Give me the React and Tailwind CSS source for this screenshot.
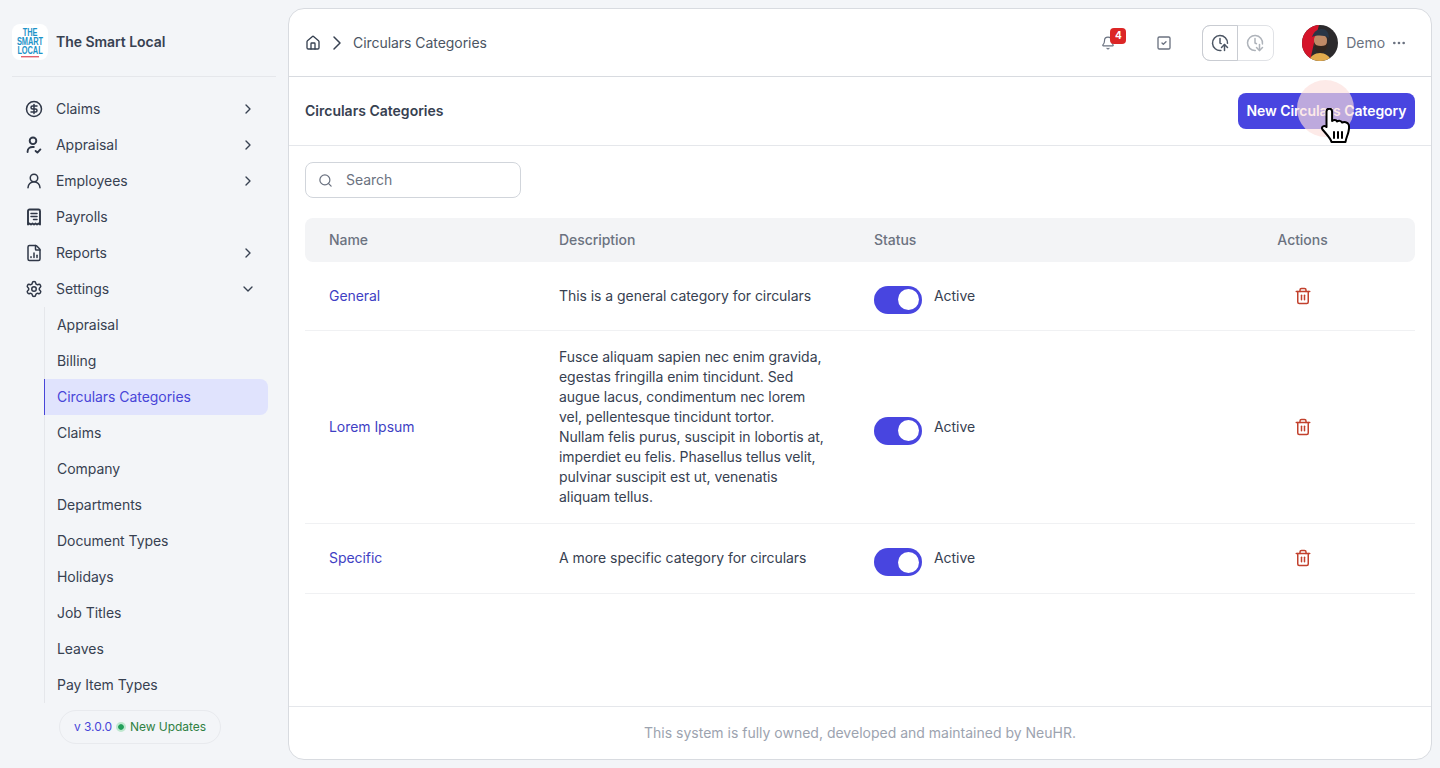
import {
    Bell,
    ChevronDown,
    ChevronRight,
    CircleDollarSign,
    ClockArrowDown,
    ClockArrowUp,
    Ellipsis,
    FileChartColumn,
    House,
    Search,
    Settings,
    SquareCheck,
    Trash2,
    UserRound,
} from 'lucide-react';

const AppraisalIcon = ({ className }) => (
    <svg viewBox="0 0 18 18" fill="none" stroke="currentColor" strokeWidth="1.9" strokeLinecap="round" strokeLinejoin="round" className={className}>
        <circle cx="8" cy="4.8" r="3.3" />
        <path d="M2.6 16v-.6c0-2.6 2.2-4.4 5-4.4h1.2" />
        <path d="M10.6 15l1.8 1.6 3-3.2" />
    </svg>
);

const PayrollIcon = ({ className }) => (
    <svg viewBox="0 0 18 18" fill="none" stroke="currentColor" strokeWidth="1.9" strokeLinecap="round" strokeLinejoin="round" className={className}>
        <path d="M3 16.500V3a1.500 1.500 0 0 1 1.500-1.500h9A1.500 1.500 0 0 1 15 3v13.500l-1.500-1-1.500 1-1.500-1-1.500 1-1.500-1-1.500 1-1.500-1z" />
        <path d="M6 5.500h6M6 8.500h6M8.500 11.500H12" strokeWidth="1.5" />
    </svg>
);

const mainLinks = [
    { label: 'Claims', icon: CircleDollarSign, arrow: true },
    { label: 'Appraisal', icon: AppraisalIcon, arrow: true },
    { label: 'Employees', icon: UserRound, arrow: true },
    { label: 'Payrolls', icon: PayrollIcon },
    { label: 'Reports', icon: FileChartColumn, arrow: true },
];

const settingsLinks = [
    'Appraisal',
    'Billing',
    'Circulars Categories',
    'Claims',
    'Company',
    'Departments',
    'Document Types',
    'Holidays',
    'Job Titles',
    'Leaves',
    'Pay Item Types',
];

const categories = [
    { name: 'General', description: 'This is a general category for circulars' },
    {
        name: 'Lorem Ipsum',
        description:
            'Fusce aliquam sapien nec enim gravida, egestas fringilla enim tincidunt. Sed augue lacus, condimentum nec lorem vel, pellentesque tincidunt tortor.\nNullam felis purus, suscipit in lobortis at, imperdiet eu felis. Phasellus tellus velit, pulvinar suscipit est ut, venenatis aliquam tellus.',
    },
    { name: 'Specific', description: 'A more specific category for circulars' },
];

const Logo = () => (
    <svg viewBox="0 0 36 36" className="w-9 h-9 rounded-lg bg-white">
        <g fill="#1d93c9" fontFamily="'Liberation Sans', sans-serif" fontWeight="700" fontSize="7.4" textAnchor="middle">
            <text transform="translate(18 11.500) scale(1 1.350)">THE</text>
            <text transform="translate(18 20.500) scale(1 1.350)">SMART</text>
            <text transform="translate(18 30) scale(1 1.350)">LOCAL</text>
        </g>
        <rect x="9" y="32" width="18" height="1.4" fill="#e2606c" />
    </svg>
);

const Avatar = () => (
    <svg viewBox="0 0 36 36" className="w-9 h-9 rounded-full">
        <rect width="36" height="36" fill="#2c2a2c" />
        <path d="M0 0h17L12 18 8 36H0z" fill="#d5142a" />
        <path d="M7 36c1-5 6-8 11-8s10 3 11 8z" fill="#e3ab4d" />
        <path d="M12 15c0-4 3-6 6-6s7 2 7 6c0 7-3 12-6.500 12S12 22 12 15z" fill="#c08a66" />
        <path d="M12 17c0 5 2 11 6.500 11S26 22 25.500 17c-1 3-3 4-6.500 4s-6-1-7-4z" fill="#33261f" />
        <path d="M10 12c2-6 6-8 10-8s7 3 7 9c-5-3-12-3-17-1z" fill="#2a3646" />
    </svg>
);

const Hand = ({ className }) => (
    <svg viewBox="0 0 32 36" fill="white" stroke="black" strokeWidth="2" strokeLinejoin="round" strokeLinecap="round" className={className}>
        <path d="M6.500 3.500a2.800 2.800 0 0 1 5.600 0V13c1.800-1.400 4-1.200 5 .5 1.800-1.200 4-.8 5 1 2-1 5.500-.5 6.500 2 .6 1.500.4 5-.2 7.500-.8 3.500-2.400 6-2.900 10H11.500c-.8-3.500-4-6.500-9-12.500-1.800-2.300 1.500-5 4-2.500V3.500z" />
        <path d="M14 24v6M18 24v6M22 24v6" fill="none" />
    </svg>
);

const Sidebar = () => (
    <aside className="w-[288px] h-full shrink-0 flex flex-col overflow-hidden">
        <div className="mx-3 mt-6 pb-4 h-[53px] flex items-start gap-2 border-b border-[#e5e7eb]">
            <Logo />
            <span className="leading-9 text-sm font-semibold text-[#374151]">The Smart Local</span>
        </div>

        <nav className="mt-[14px] ml-3 w-[256px] h-[612px] overflow-hidden text-sm text-[#374151]">
            {mainLinks.map((link) => (
                <a key={link.label} className="h-9 pl-[13px] pr-3 flex items-center">
                    <link.icon className="w-[18px] h-[18px] text-[#2f3747]" />
                    <span className="ml-[13px] flex-1">{link.label}</span>
                    {link.arrow && <ChevronRight className="w-4 h-4" />}
                </a>
            ))}

            <a className="h-9 pl-[13px] pr-3 flex items-center">
                <Settings className="w-[18px] h-[18px] text-[#2f3747]" />
                <span className="ml-[13px] flex-1">Settings</span>
                <ChevronDown className="w-4 h-4" />
            </a>

            <ul className="ml-8 border-l border-[#e5e7eb]">
                {settingsLinks.map((link) => {
                    const active = link === 'Circulars Categories';
                    return (
                        <li
                            key={link}
                            className={`h-9 pl-3 flex items-center ${
                                active ? 'bg-[#e0e3fd] text-[#4845d8] rounded-r-lg border-l border-[#4845d8] -ml-px' : ''
                            }`}
                        >
                            {link}
                        </li>
                    );
                })}
            </ul>
        </nav>

        <div className="ml-[59px] mt-[7px] w-[162px] h-[34px] rounded-full border border-[#e8eaee] flex items-center justify-center text-xs">
            <span className="text-[#4845d8]">v 3.0.0</span>
            <span className="mx-[6px] w-[6px] h-[6px] rounded-full bg-[#22a05a] outline-2 outline-[#bfe8cf]"></span>
            <span className="text-[#2f8043]">New Updates</span>
        </div>
    </aside>
);

const Header = () => (
    <header className="h-[68px] shrink-0 pl-4 pr-6 flex items-center border-b border-[#d8dbe0]">
        <House className="w-4 h-4 text-[#374151]" />
        <ChevronRight className="ml-1 w-6 h-6 text-[#374151]" strokeWidth={1.5} />
        <span className="ml-1 text-sm text-[#4b5563]">Circulars Categories</span>

        <div className="ml-auto flex items-center">
            <div className="relative mr-[41px]">
                <Bell className="w-[14px] h-[14px] text-[#6b7280]" />
                <span className="absolute -top-2 left-[9px] w-4 h-4 rounded bg-[#dc2626] text-white text-[10px] font-bold flex items-center justify-center">
                    4
                </span>
            </div>
            <SquareCheck className="w-4 h-4 text-[#6b7280]" />
            <div className="ml-[30px] h-9 w-[72px] flex rounded-lg border border-[#e0e2e6]">
                <div className="w-9 rounded-l-lg border border-[#c9ccd2] -m-px flex items-center justify-center">
                    <ClockArrowUp className="w-[18px] h-[18px] text-[#4b5563]" />
                </div>
                <div className="flex-1 flex items-center justify-center">
                    <ClockArrowDown className="w-[18px] h-[18px] text-[#aeb3ba]" />
                </div>
            </div>
            <div className="ml-7">
                <Avatar />
            </div>
            <span className="ml-2 text-sm text-[#6b7280]">Demo</span>
            <Ellipsis className="ml-[6px] w-4 h-4 text-[#6b7280]" />
        </div>
    </header>
);

const StatusToggle = () => (
    <div className="pt-2 flex items-start gap-3">
        <div className="w-12 h-7 rounded-full bg-[#4845e0] flex items-center justify-end pr-[3px]">
            <span className="w-[21px] h-[21px] rounded-full bg-white"></span>
        </div>
        <span className="leading-5">Active</span>
    </div>
);

const CategoriesTable = () => (
    <table className="mt-5 w-[1110px] table-fixed text-sm text-left">
        <thead>
            <tr className="h-11 bg-[#f3f4f6] text-[#6b7280]">
                <th className="w-[230px] pl-6 font-medium rounded-l-lg">Name</th>
                <th className="w-[315px] pl-6 font-medium">Description</th>
                <th className="w-[340px] pl-6 font-medium">Status</th>
                <th className="font-medium text-center rounded-r-lg">Actions</th>
            </tr>
        </thead>
        <tbody className="text-[#374151]">
            {categories.map((row) => (
                <tr key={row.name} className="h-[68px] last:h-[70px] border-b border-[#f0f1f3]">
                    <td className="pl-6 text-[#3f3fc4]">{row.name}</td>
                    <td className="pl-6 pr-6 py-4 leading-5 whitespace-pre-line">{row.description}</td>
                    <td className="pl-6">
                        <StatusToggle />
                    </td>
                    <td>
                        <Trash2 className="mx-auto w-[18px] h-[18px] text-[#c2412d]" />
                    </td>
                </tr>
            ))}
        </tbody>
    </table>
);

export default function App() {
    return (
        <div className="w-full h-[768px] flex bg-[#f3f5f8] overflow-hidden tracking-[-0.05px] font-['Inter',sans-serif]">
            <Sidebar />

            <main className="relative my-2 w-[1144px] flex flex-col bg-white rounded-2xl border border-[#d8dbe0] overflow-hidden">
                <Header />

                <div className="h-[69px] shrink-0 px-4 flex items-center justify-between border-b border-[#e5e7eb]">
                    <h1 className="text-sm font-semibold tracking-normal text-[#374151]">Circulars Categories</h1>
                    <button className="h-9 w-[177px] rounded-lg bg-[#4845e0] text-white text-sm font-semibold">
                        New Circulars Category
                    </button>
                </div>

                <div className="flex-1 px-4 pt-4">
                    <div className="w-[216px] h-9 px-3 flex items-center rounded-lg border border-[#d1d5db]">
                        <Search className="w-[15px] h-[15px] text-[#6b7280]" />
                        <span className="ml-[13px] text-sm text-[#6b7280]">Search</span>
                    </div>
                    <CategoriesTable />
                </div>

                <footer className="h-[53px] shrink-0 flex items-center justify-center border-t border-[#e5e7eb] text-sm tracking-normal text-[#9ca3af]">
                    This system is fully owned, developed and maintained by NeuHR.
                </footer>

                {/* click highlight and hand cursor from the recording */}
                <div className="absolute left-[1008px] top-[71px] w-[57px] h-[57px] rounded-full bg-[#fcdedc]/65"></div>
                <Hand className="absolute left-[1031px] top-[99px] w-8 h-9" />
            </main>
        </div>
    );
}
